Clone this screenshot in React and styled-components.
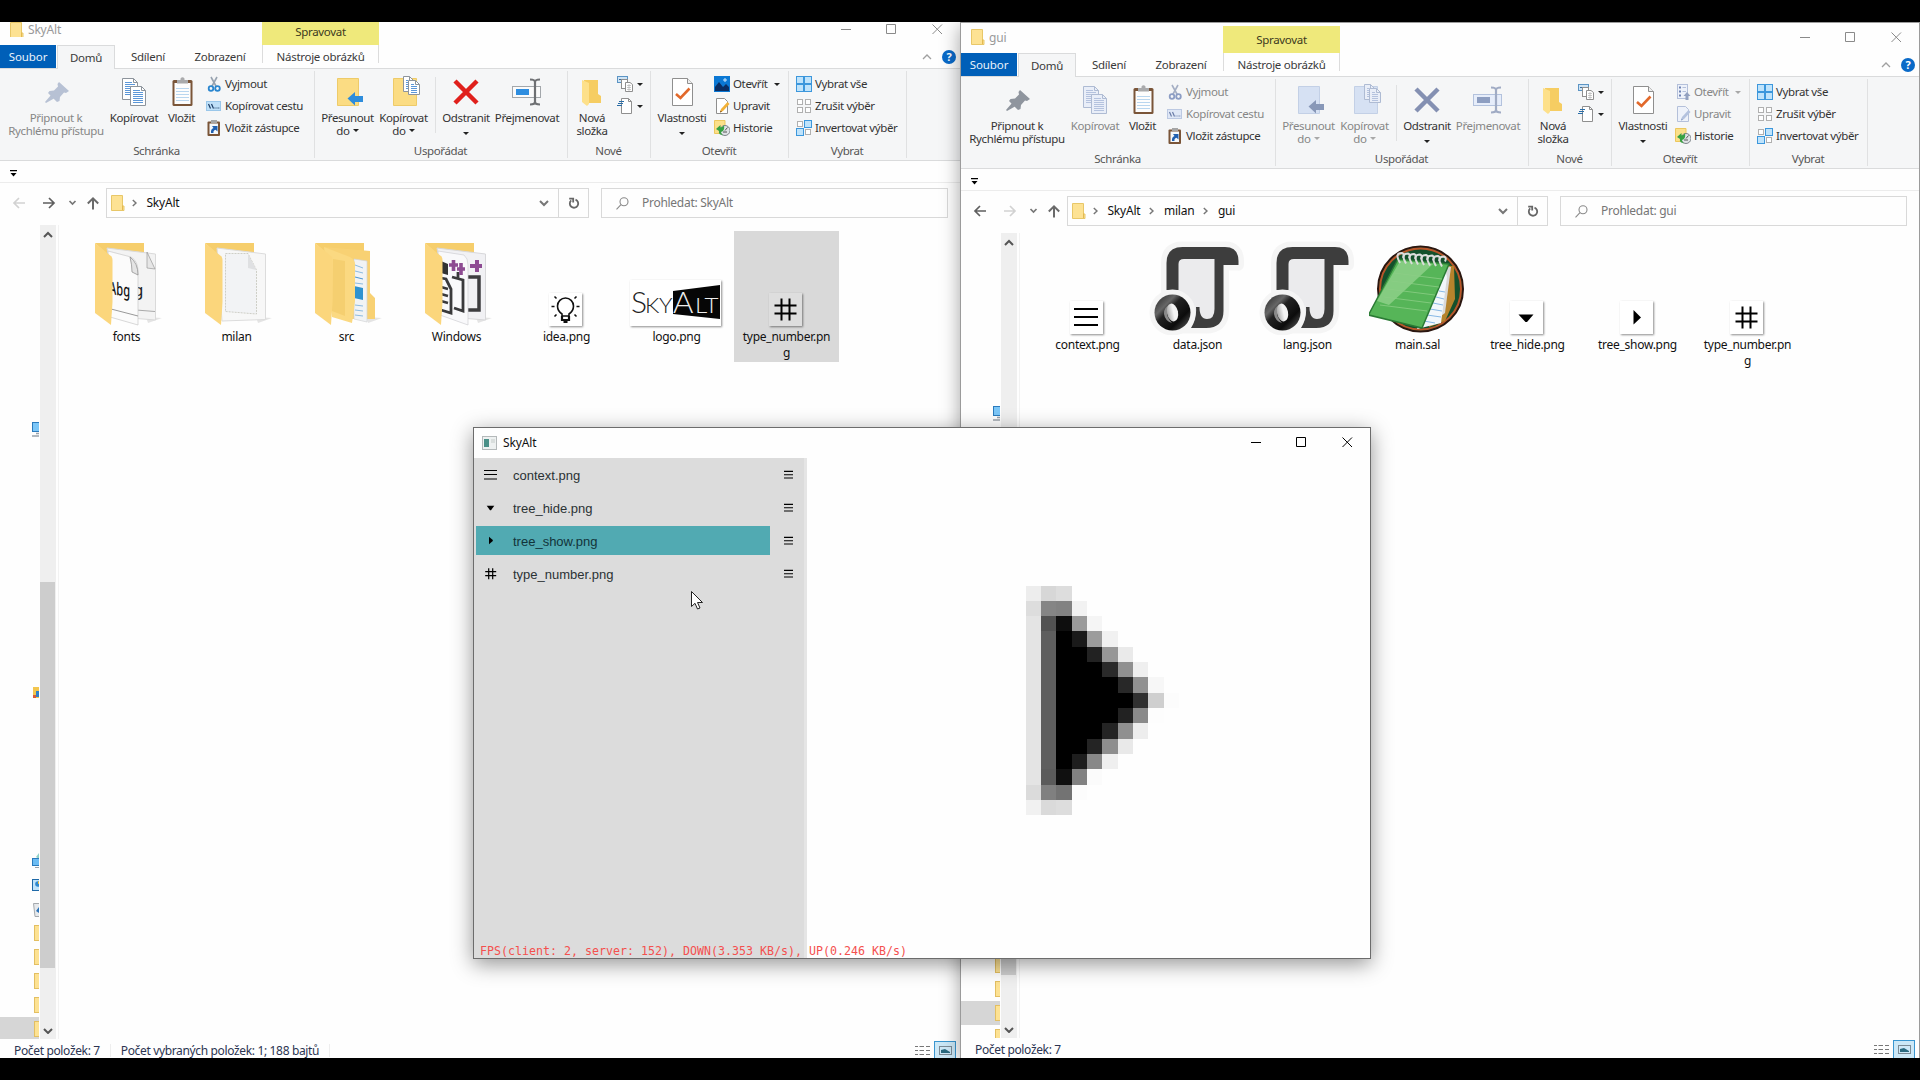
import React from "react";
import styled, { createGlobalStyle, css } from "styled-components";

const GlobalStyle = createGlobalStyle`
  html, body { margin: 0; padding: 0; background: #000; }
  *, *::before, *::after { box-sizing: border-box; }
  svg { display: block; flex: none; }
`;

const UI = `"Noto Sans", "Open Sans", sans-serif`;

/* ---------- desktop ---------- */

const Desktop = styled.div`
  position: relative;
  width: 1920px;
  height: 1080px;
  overflow: hidden;
  background: #000;
  font: 11.5px/13px ${UI};
  letter-spacing: -0.37px;
  color: #1e1e1e;
`;

const Screen = styled.div`
  position: absolute;
  inset: 22px 0;
  overflow: hidden;
  background: #fefefe;
`;

const Frame = styled.section`
  position: absolute;
  top: 0;
  left: ${(p) => p.$x}px;
  width: ${(p) => p.$w}px;
  height: 1036px;
  display: flex;
  flex-direction: column;
  background: #fefefe;
  ${(p) =>
    p.$framed &&
    css`
      border: 1px solid #9b9b9b;
      border-bottom: 0;
      box-shadow: 0 4px 18px rgba(0, 0, 0, 0.36);
    `}
`;

/* ---------- title bar and tabs ---------- */

const TitleBar = styled.header`
  display: flex;
  align-items: flex-end;
  height: ${(p) => p.$h}px;
  flex: none;
`;
const TitleName = styled.div`
  display: flex;
  align-items: flex-end;
  gap: 4px;
  width: 262px;
  height: 24px;
  padding: 0 0 8px 10px;
  color: #999;
  font-size: 12px;
  line-height: 15px;
  letter-spacing: -0.2px;
`;
const ContextTab = styled.div`
  width: 117px;
  height: 27px;
  max-height: 100%;
  padding-bottom: 7px;
  display: flex;
  align-items: flex-end;
  justify-content: center;
  background: #efe97b;
  color: #3c3a20;
  letter-spacing: -0.3px;
`;
const Caption = styled.div`
  display: flex;
  gap: 35px;
  margin-left: auto;
  padding: 0 17px 10px 0;
`;
const Tabs = styled.nav`
  display: flex;
  height: 24px;
  flex: none;
  border-bottom: 1px solid #dadbdc;
`;
const Tab = styled.div`
  width: ${(p) => p.$w}px;
  height: 23px;
  display: flex;
  align-items: center;
  justify-content: center;
  color: #3a3a3a;
  letter-spacing: -0.28px;
  ${(p) =>
    p.$file &&
    css`
      background: #005fb8;
      color: #e9f2fb;
      letter-spacing: -0.1px;
    `}
  ${(p) =>
    p.$active &&
    css`
      height: 24px;
      padding-bottom: 1px;
      background: #f5f6f7;
      border: 1px solid #dadbdc;
      border-bottom: 0;
      margin-left: 1px;
    `}
  ${(p) =>
    p.$ctx &&
    css`
      height: 18px;
      padding-top: 5px;
      border: 1px solid #dcdcdc;
      border-width: 0 1px;
      margin-left: auto;
    `}
`;
const TabGroup = styled.div`
  display: flex;
  width: 262px;
`;
const TabTools = styled.div`
  display: flex;
  align-items: center;
  gap: 10px;
  margin-left: auto;
  padding-right: 4px;
`;
const Help = styled.div`
  width: 14px;
  height: 14px;
  border-radius: 50%;
  background: #0a6ac8;
  color: #fff;
  font: 700 11px/14px ${UI};
  text-align: center;
`;

/* ---------- ribbon ---------- */

const Ribbon = styled.div`
  display: flex;
  height: 92px;
  flex: none;
  padding-top: 2px;
  background: #f5f6f7;
  border-bottom: 1px solid #dadbdc;
`;
const Group = styled.div`
  display: flex;
  flex-direction: column;
  justify-content: space-between;
  width: ${(p) => p.$w}px;
  height: 87px;
  padding-top: 5px;
  border-right: 1px solid #e0e1e2;
`;
const GroupName = styled.div`
  padding-bottom: 1px;
  padding-right: 1px;
  text-align: center;
  color: #555;
`;
const Tools = styled.div`
  display: flex;
  height: 62px;
`;
const Big = styled.div`
  display: flex;
  flex-direction: column;
  align-items: center;
  width: ${(p) => p.$w}px;
  margin-left: ${(p) => p.$ml || 0}px;
  color: ${(p) => (p.$off ? "#868686" : "#333")};
  text-align: center;
  white-space: nowrap;
`;
const BigText = styled.div`
  margin-top: 3px;
`;
const Inline = styled.span`
  display: inline-flex;
  align-items: center;
  gap: 3px;
  min-height: 13px;
`;
const Column = styled.div`
  display: flex;
  flex-direction: column;
  gap: 6px;
  margin-left: ${(p) => p.$ml}px;
`;
const Small = styled.div`
  display: flex;
  align-items: center;
  gap: 3px;
  height: 16px;
  color: ${(p) => (p.$off ? "#868686" : "#333")};
  white-space: nowrap;
`;
const SmallText = styled.span`
  padding-bottom: 2px;
`;
const Divider = styled.div`
  width: 1px;
  height: 56px;
  margin: 1px 2px 0 4px;
  background: #e0e1e2;
`;
const Down = styled.i`
  border: 3px solid transparent;
  border-top-color: ${(p) => (p.$off ? "#a8a8a8" : "#222")};
  border-bottom: 0;
  margin-left: ${(p) => p.$ml || 0}px;
`;

/* ---------- quick access and address ---------- */

const Quick = styled.div`
  display: flex;
  align-items: center;
  height: 22px;
  flex: none;
  padding: 3px 0 0 10px;
  border-bottom: 1px solid #ececec;
`;
const NavRow = styled.div`
  display: flex;
  height: 42px;
  flex: none;
  padding: 5px 12px 7px 0;
`;
const NavIcons = styled.div`
  width: 106px;
`;
const Address = styled.div`
  flex: 1;
  display: flex;
  align-items: center;
  padding-left: 4px;
  border: 1px solid #d9d9d9;
  font-size: 12px;
  line-height: 16px;
  letter-spacing: -0.22px;
  color: #111;
`;
const Crumb = styled.span`
  display: flex;
  align-items: center;
  gap: 9.5px;
  margin-left: ${(p) => p.$ml}px;
`;
const AddressEnd = styled.div`
  display: flex;
  align-items: center;
  justify-content: space-between;
  align-self: stretch;
  width: 49px;
  margin-left: auto;
`;
const Refresh = styled.div`
  display: flex;
  align-items: center;
  justify-content: center;
  width: 30px;
  height: 28px;
  border-left: 1px solid #d9d9d9;
`;
const Search = styled.div`
  display: flex;
  align-items: center;
  gap: 13px;
  width: 347px;
  margin-left: 12px;
  padding-left: 14px;
  border: 1px solid #d9d9d9;
  color: #767676;
  font-size: 12px;
  line-height: 16px;
  letter-spacing: -0.28px;
`;

/* ---------- body ---------- */

const Body = styled.div`
  display: flex;
  flex: 1;
  min-height: 0;
`;
const Tree = styled.ul`
  width: 39px;
  margin: 0 1px 0 0;
  padding: 0;
  overflow: hidden;
  list-style: none;
`;
const TreeRow = styled.li`
  display: flex;
  align-items: center;
  height: 24px;
  padding-left: 32px;
  background: ${(p) => (p.$sel ? "#d6d6d6" : "transparent")};
`;
const Scroll = styled.div`
  display: flex;
  flex-direction: column;
  justify-content: space-between;
  width: 16px;
  background: #efefef;
`;
const ScrollButton = styled.div`
  display: flex;
  align-items: center;
  justify-content: center;
  width: 15px;
  height: 18px;
`;
const Thumb = styled.div`
  width: 15px;
  height: 386px;
  margin-top: ${(p) => p.$top}px;
  margin-bottom: auto;
  background: #cdcdcd;
`;
const Files = styled.div`
  display: flex;
  flex: 1;
  align-items: flex-start;
  gap: 5px;
  margin-left: 2px;
  padding: 6px 0 0 15px;
  border-left: 1px solid #f2f2f2;
`;
const File = styled.figure`
  display: flex;
  flex-direction: column;
  align-items: center;
  width: 105px;
  height: 131px;
  margin: 0;
  background: ${(p) => (p.$sel ? "#d9d9d9" : "transparent")};
`;
const Thumbnail = styled.div`
  display: flex;
  align-items: flex-end;
  justify-content: center;
  width: 97px;
  height: 96px;
  padding-right: 1px;
`;
const Picture = styled.div`
  margin: 0 2px 1px 0;
  padding: 1px;
  background: ${(p) => (p.$sel ? "#dedede" : "#fff")};
  box-shadow: 0.5px 0.5px 2px rgba(0, 0, 0, 0.45);
`;
const Name = styled.figcaption`
  width: 92px;
  margin-top: 2px;
  color: #111;
  font-size: 12px;
  line-height: 16px;
  letter-spacing: -0.27px;
  text-align: center;
  word-break: break-all;
`;
const Status = styled.footer`
  display: flex;
  align-items: center;
  height: ${(p) => p.$h}px;
  flex: none;
  padding: ${(p) => p.$pad}px 4px 0 14px;
  color: #2c3552;
  font-size: 12px;
  letter-spacing: -0.35px;
`;
const StatusText = styled.span`
  padding-right: 10px;
  margin-right: 10px;
  border-right: 1px solid ${(p) => (p.$bar ? "#eee" : "transparent")};
`;
const Views = styled.div`
  display: flex;
  align-items: center;
  gap: 3px;
  margin-left: auto;
`;
const ViewOn = styled.div`
  display: flex;
  align-items: center;
  justify-content: center;
  width: 22px;
  height: 20px;
  border: 1px solid #3a96d0;
  background: #cce8f7;
`;

/* ---------- application window ---------- */

const AppWindow = styled.section`
  position: absolute;
  left: 473px;
  top: 405px;
  width: 898px;
  height: 532px;
  display: flex;
  flex-direction: column;
  border: 1px solid #6c6c6c;
  background: #fefefe;
  box-shadow: 0 5px 20px rgba(0, 0, 0, 0.42);
`;
const AppTitle = styled.header`
  display: flex;
  align-items: center;
  gap: 6px;
  height: 30px;
  padding: 0 17px 1px 8px;
  color: #111;
  font-size: 12px;
  letter-spacing: -0.15px;
`;
const AppCaption = styled.div`
  display: flex;
  gap: 35px;
  margin-left: auto;
`;
const AppBody = styled.div`
  display: flex;
  flex: 1;
`;
const Side = styled.div`
  display: flex;
  flex-direction: column;
  gap: 4px;
  width: 333px;
  padding: 2px;
  background: #dcdcdc;
  border-right: 3px solid #e5e5e5;
`;
const SideRow = styled.div`
  display: flex;
  align-items: center;
  gap: 14px;
  height: 29px;
`;
const SideItem = styled.div`
  display: flex;
  align-items: center;
  gap: 13px;
  width: 294px;
  height: 29px;
  padding-left: 4px;
  background: ${(p) => (p.$on ? "#51aab2" : "transparent")};
  color: ${(p) => (p.$on ? "#12343a" : "#2b3234")};
  font: 13px/19px "Liberation Sans", Arial, sans-serif;
  letter-spacing: 0;
`;
const SideName = styled.span`
  padding-top: 2px;
`;
const Canvas = styled.div`
  flex: 1;
  padding: 128px 0 0 219px;
`;
const Fps = styled.div`
  position: absolute;
  left: 6px;
  bottom: 0;
  color: #f4504e;
  font: 11.63px/14px "DejaVu Sans Mono", monospace;
  letter-spacing: 0;
  white-space: pre;
`;
const Cursor = styled.svg`
  position: absolute;
  left: 690px;
  top: 568px;
`;

/* ---------- glyphs ---------- */

const CaptionGlyphs = ({ color }) => (
  <>
    {["M1 5.5H11", "M.5 .5H9.5V9.5H.5Z", "M.5 .5L10 10M10 .5L.5 10"].map((d) => (
      <svg key={d} width="11" height="11" viewBox="0 0 11 11" fill="none" stroke={color}>
        <path d={d} />
      </svg>
    ))}
  </>
);

const MiniFolder = ({ h = 16 }) => (
  <svg width="14" height={h} viewBox="0 0 14 16" preserveAspectRatio="xMinYMin slice">
    <path d="M.5 .5H11.5V11H13V15.5H.5Z" fill="#fde293" stroke="#e8c768" />
    <path d="M11.5 10.5V15" stroke="#e3b951" />
  </svg>
);

const Sheet = ({ x, y, w = 15, h = 20, off }) => (
  <g transform={`translate(${x} ${y})`}>
    <path
      d={`M.5 .5H${w - 4.5}L${w - 0.5} 4.5V${h - 0.5}H.5Z`}
      fill={off ? "#e9eef8" : "#fff"}
      stroke={off ? "#aebbd3" : "#8d949c"}
    />
    <path d={`M${w - 4.5} .5V4.5H${w - 0.5}`} fill="none" stroke={off ? "#aebbd3" : "#8d949c"} />
    {[4, 6, 8, 10, 12, 14, 16].filter((v) => v < h - 2).map((v) => (
      <path key={v} d={`M3 ${v + 0.5}H${v < 6 ? w - 6 : w - 3}`} stroke={off ? "#b4c2de" : "#5c97d8"} />
    ))}
  </g>
);

const bigIcons = {
  pin: (o) => (
    <g fill={o ? "#b7c1d4" : "#8f959e"}>
      <path d="M19 6L29 15L26 17L24 16.5L20 21L19.500 25L17 26L8 17L9.500 15L14 14.500L18 10.500L17.500 8Z" />
      <path d="M11 19L14 22.500L6 27L5 26Z" />
    </g>
  ),
  copy: (o) => (
    <>
      <Sheet x={4} y={2} w={16} h={22} off={o} />
      <Sheet x={12} y={10} w={16} h={20} off={o} />
    </>
  ),
  paste: () => (
    <>
      <rect x="6.500" y="4" width="20" height="26" rx="1.500" fill="#7a5538" />
      <rect x="8.500" y="7" width="16" height="21" fill="#fdfdfd" />
      <path d="M10 12.500H23M10 15.500H23M10 18.500H23M10 21.500H23M10 24.500H23" stroke="#b9d6ef" />
      <path d="M11 4H14.500V2.500Q16.500 0 18.500 2.500V4H22V7.500H11Z" fill="#a9aaac" />
    </>
  ),
  move: (o) => (
    <>
      <path d="M5.500 2.500H26.500V29.500H5.500Z" fill={o ? "#d6e1f3" : "#fbdc83"} stroke={o ? "#c3d0e6" : "#eecb69"} />
      <path d="M15.500 22.500L23 16V20H31V26H23V29.500Z" fill={o ? "#8898b8" : "#2e8ddc"} />
    </>
  ),
  copyTo: (o) => (
    <>
      <path d="M5.500 2.500H28.500V29.500H5.500Z" fill={o ? "#d6e1f3" : "#fbdc83"} stroke={o ? "#c3d0e6" : "#eecb69"} />
      <Sheet x={15} y={0} w={11} h={16} off={o} />
      <Sheet x={20} y={4} w={12} h={15} off={o} />
    </>
  ),
  remove: (o) => <path d="M5 5L27 27M27 5L5 27" stroke={o ? "#8490b2" : "#e0201c"} strokeWidth="4.500" />,
  rename: (o) => (
    <>
      <rect x="1.500" y="10.500" width="28" height="11" fill={o ? "#e6edfa" : "#fbfbfb"} stroke={o ? "#b3c2dd" : "#a3a7ab"} />
      <rect x="5" y="13" width="13" height="6" fill={o ? "#8d9ec1" : "#2f8ee0"} />
      <path d="M19 3.500Q24 3.500 24 6V26Q24 28.500 19 28.500M29 3.500Q24 3.500 24 6M24 26Q24 28.500 29 28.500" fill="none" stroke={o ? "#a0abc4" : "#6e7073"} strokeWidth="2.200" />
    </>
  ),
  newFolder: () => (
    <>
      <path d="M8 4H22V18L25 20V27H8Z" fill="#f6cd62" />
      <path d="M6 4L13 7V28L11 30L6 26Z" fill="#fde08a" />
    </>
  ),
  props: () => (
    <>
      <path d="M6.500 2.500H21.500L26.500 7.500V29.500H6.500Z" fill="#fff" stroke="#8f8f8f" />
      <path d="M21.500 2.500V7.500H26.500" fill="#eee" stroke="#8f8f8f" />
      <path d="M10 18L14.500 22L23.500 12.500" fill="none" stroke="#e2692b" strokeWidth="2.600" />
    </>
  ),
};

const grid = (cells) => (
  <>
    {[[0.5, 0.5], [8.5, 0.5], [0.5, 8.5], [8.5, 8.5]].map(([x, y], i) =>
      cells[i] ? (
        <rect key={i} x={x} y={y} width="7" height="7" fill="#bfe3fb" stroke="#3c97dc" />
      ) : (
        <rect key={i} x={x + 1} y={y + 1} width="5" height="5" fill="#fff" stroke="#b0b0b0" />
      )
    )}
  </>
);

const smallIcons = {
  cut: (o) => (
    <>
      <path d="M5 1L10.500 11M11 1L5.500 11" stroke={o ? "#a5afc4" : "#98a3b0"} strokeWidth="1.600" />
      <g fill="none" stroke={o ? "#8c9dc4" : "#2a86cf"} strokeWidth="1.800">
        <circle cx="5" cy="12.500" r="2.300" />
        <circle cx="11.500" cy="12.500" r="2.300" />
      </g>
    </>
  ),
  path: (o) => (
    <>
      <rect x=".5" y="3.500" width="14" height="9" fill={o ? "#dfe7f6" : "#bfe0f8"} stroke={o ? "#bcc9e2" : "#9ac7ea"} />
      <path d="M2.500 6L4.500 10.500M5.500 6L7.500 10.500M8.500 10H9.500M10.500 10H11.500M12.300 10H13.300" stroke={o ? "#6a7ca8" : "#1c3d66"} strokeWidth="1.200" />
    </>
  ),
  shortcut: () => (
    <>
      <rect x="1.500" y="1.500" width="12.500" height="14.500" rx="1" fill="#7a5538" />
      <rect x="3.500" y="3.500" width="8.500" height="10.500" fill="#f4f8fc" />
      <rect x="5" y="0" width="6" height="3" fill="#a5a5a5" />
      <path d="M5 13Q4.500 9 7.500 8L6 6H11.500V11.500L9.500 9.800Q7 10.500 7.500 13Z" fill="#1f5fb0" />
    </>
  ),
  image: () => (
    <>
      <rect width="16" height="16" fill="#0b78d4" />
      <path d="M1 11L5 6L9 11L12 8L15 11V15H1Z" fill="#0b2e63" />
      <path d="M11 2V6M9 4H13" stroke="#cfe9ff" />
    </>
  ),
  list: () => (
    <>
      <rect x="2.500" y=".5" width="10" height="14" fill="#eef2fa" stroke="#b4c0da" />
      <path d="M4 3.500H6M4 7.500H6M4 11.500H6" stroke="#6f83b3" strokeWidth="2" />
      <path d="M7.500 3.500H11M7.500 7.500H11" stroke="#b4c0da" />
      <path d="M12 8L15.500 12H13.500V16H10.500V12H8.500Z" fill="#93a1c0" />
    </>
  ),
  edit: (o) => (
    <>
      <path d="M2.500 .5H10.500L13.500 3.500V15.500H2.500Z" fill={o ? "#eef2fa" : "#fff"} stroke={o ? "#b4c0da" : "#8f8f8f"} />
      <path d="M6 14.500L7 11L13.500 4L15.500 6L9 13Z" fill={o ? "#b4c2de" : "#f2b138"} />
      <path d="M6 14.500L6.600 12.500L8 13.800Z" fill={o ? "#8c9dc4" : "#7a4b18"} />
    </>
  ),
  history: () => (
    <>
      <path d="M.5 .5H11V13.500H.5Z" fill="#fbe08a" stroke="#ecc75d" />
      <circle cx="11" cy="10.500" r="5" fill="#dfe3e6" stroke="#7c8388" />
      <path d="M11 10.500L13.500 7.500M9 12H13" stroke="#555" />
      <path d="M2 9L6.500 5V7.500Q9.500 7 10 5Q11 11 7 12Q7 14 9 15.500Q4 14.500 5 11Z" fill="#37a243" />
    </>
  ),
  all: () => grid([1, 1, 1, 1]),
  none: () => grid([0, 0, 0, 0]),
  invert: () => grid([0, 1, 1, 0]),
  newItem: () => (
    <>
      <rect x=".5" y=".5" width="10" height="6" fill="#cfe4f5" stroke="#5b94c4" />
      <path d="M2 3.500H9" stroke="#3a6d9c" strokeDasharray="2 1" />
      <rect x="4.500" y="3.500" width="6" height="9" fill="#fff" stroke="#8f8f8f" />
      <path d="M8.500 6.500H13L15.500 8.500V15.500H8.500Z" fill="#fff" stroke="#8f8f8f" />
      <path d="M10 9.500H14M10 11.500H14M10 13.500H14M12 8V15" stroke="#b5b5b5" strokeWidth=".7" />
    </>
  ),
  easy: () => (
    <>
      <path d="M4.500 .5H11.500L14.500 3.500V15.500H4.500Z" fill="#fff" stroke="#8f8f8f" />
      <path d="M11.500 .5V3.500H14.500" fill="none" stroke="#8f8f8f" />
      <path d="M2 3.500H7M1 5.500H6M0 7.500H5" stroke="#2b6ea8" />
    </>
  ),
};

const BigIcon = ({ name, off }) => (
  <svg width="32" height="32" viewBox="0 0 32 32">{bigIcons[name](off)}</svg>
);
const SmallIcon = ({ name, off }) => (
  <svg width="16" height="16" viewBox="0 0 16 16">{smallIcons[name](off)}</svg>
);

const NavArrows = ({ forward }) => {
  const [b, f] = forward ? ["#d2d2d2", "#5f5f5f"] : ["#5f5f5f", "#d2d2d2"];
  return (
    <svg width="106" height="30" viewBox="0 0 106 30" fill="none" strokeWidth="1.700">
      <path d="M25 15H14M19 10L14 15L19 20" stroke={b} />
      <path d="M43 15H54M49 10L54 15L49 20" stroke={f} />
      <path d="M69.500 13L72.500 16L75.500 13" stroke="#777" />
      <path d="M93 21.500V10.500M87.800 15.500L93 10.300L98.200 15.500" stroke="#6a6a6a" strokeWidth="2" />
    </svg>
  );
};

const Chevron = ({ d, w = 9, h = 9, color = "#555", sw = 2 }) => (
  <svg width={w} height={h} viewBox={`0 0 ${w} ${h}`} fill="none" stroke={color} strokeWidth={sw}>
    <path d={d} />
  </svg>
);

const hashPath = "M0 7H22M0 15H22M7 0V22M15 0V22";

/* ---------- file thumbnails ---------- */

const FolderBack = () => (
  <>
    <path d="M17 12H66V30L30 24Z" fill="#f6ce6c" />
    <path d="M70 92L84 87L68 86Z" fill="#e4e4e4" />
  </>
);
const FolderFront = () => (
  <path d="M17 12L33.500 25.500Q34.500 27 34.500 29V71L33 94L17 82Z" fill="#fbd67c" />
);

const thumbs = {
  fonts: () => (
    <svg width="96" height="96" viewBox="0 0 96 96">
      <FolderBack />
      <path d="M29 17L77.500 23V89L40 86Z" fill="#f3f3f3" stroke="#dadada" />
      <path d="M69 21L77 38L69 37Z" fill="#e6e6e6" stroke="#999" strokeWidth=".7" />
      <path d="M58 79L77 80.500" stroke="#aaa" />
      <text x="55" y="65" fontSize="17" fontFamily="Noto Sans" fill="#222">g</text>
      <path d="M30 20L53 26Q60 30 60 40V94L32 86Z" fill="#fbfbfb" stroke="#c9c9c9" strokeWidth=".7" />
      <path d="M52 26Q54 34 54 41L60 44Q60 32 52 26Z" fill="#e4e4e4" stroke="#888" strokeWidth=".7" />
      <path d="M33 78L60 85" stroke="#999" />
      <text transform="translate(31 63) skewY(8)" fontSize="17.500" letterSpacing="0" textLength="21" lengthAdjust="spacingAndGlyphs" fontFamily="Noto Sans" fontWeight="500" fill="#111">Abg</text>
      <FolderFront />
    </svg>
  ),
  milan: () => (
    <svg width="96" height="96" viewBox="0 0 96 96">
      <FolderBack />
      <path d="M29 17L77.500 23V88.500L34 90Z" fill="#f7f7f7" stroke="#dcdcdc" />
      <path d="M37.500 22.500H60L68.500 39V83L37.500 80.500Z" fill="#f2f3f5" stroke="#c4c4ba" strokeDasharray="2 1" strokeWidth=".8" />
      <path d="M60 23L68.500 39L60 37Z" fill="#dfe0e2" />
      <FolderFront />
    </svg>
  ),
  src: () => (
    <svg width="96" height="96" viewBox="0 0 96 96">
      <FolderBack />
      <path d="M26 16L72 20V62L77 67V88H50Z" fill="#f8d173" />
      <path d="M56 28L69 30V91L56 88Z" fill="#f1f3f5" stroke="#d2d4d6" strokeWidth=".7" />
      <path d="M57 34L65 37M57 40L65 42M57 52L65 53M57 74L65 75M57 79L65 80M57 84L65 85" stroke="#8dbbe0" />
      <path d="M57 46L65 48" stroke="#4d97d0" />
      <path d="M56 55L65 57V69L56 67Z" fill="#2f92cf" />
      <path d="M26 16L52 26Q57 29 57 33V70L54 92L34 86Z" fill="#fbd981" />
      <path d="M35 28L47 30V85L34 80Z" fill="#f5cf70" />
      <FolderFront />
    </svg>
  ),
  windows: () => (
    <svg width="96" height="96" viewBox="0 0 96 96">
      <FolderBack />
      <path d="M29 17L77.500 23V89L40 86Z" fill="#f1f1f4" stroke="#d8d8da" />
      <path d="M60 46H71V79H60" fill="none" stroke="#3d3d3f" strokeWidth="3.500" />
      <path d="M62 35H74M69 29V41" stroke="#8d4b92" strokeWidth="4" />
      <path d="M30 20L56 24Q60 27 60 34V94L32 84Z" fill="#f9f9fb" stroke="#cfcfd2" strokeWidth=".7" />
      <path d="M33 30L40 33V44L33 42Z" fill="#333" />
      <path d="M33 47L38 48L43 58V82L33 79M44 46L55 49V80L46 77M50 41V47" fill="none" stroke="#3a3a3c" strokeWidth="2.800" />
      <path d="M33 56L40 58M33 63L40 65M33 70L40 72" stroke="#3a3a3c" strokeWidth="2.500" />
      <path d="M41 34H50M45.500 29V40M49 38H57M53 32V44" stroke="#8d4b92" strokeWidth="3.600" />
      <FolderFront />
    </svg>
  ),
  idea: () => (
    <Picture>
      <svg width="31" height="31" viewBox="0 0 31 31" fill="none" stroke="#111" strokeWidth="1.600">
        <path d="M12 22V20Q7.500 17 7.500 12A8 8 0 0 1 23.500 12Q23.500 17 19 20V22Z" />
        <path d="M12 22V26H19V22M13.500 28H17.500" strokeWidth="2.200" />
        <path d="M1.500 12.500H4.500M26.500 12.500H29.500M4.500 2.500L6.500 4.500M26.500 2.500L24.500 4.500M4.500 22.500L6.500 20.500M26.500 22.500L24.500 20.500" />
      </svg>
    </Picture>
  ),
  logo: () => (
    <Picture>
      <svg width="89" height="44" viewBox="0 0 89 44">
        <path d="M42 10L89 4V38L42 33Z" fill="#060606" />
        <g fontFamily="Lato" fontWeight="300" fill="#222">
          <text x="0" y="32" fontSize="30" letterSpacing="0">S</text>
          <text x="14" y="32" fontSize="22" textLength="27" lengthAdjust="spacingAndGlyphs">KY</text>
          <text x="42" y="32" fontSize="30" textLength="20" lengthAdjust="spacingAndGlyphs" fill="#eee">A</text>
          <text x="64" y="32" fontSize="22" textLength="23" lengthAdjust="spacingAndGlyphs" fill="#eee">LT</text>
        </g>
      </svg>
    </Picture>
  ),
  hash: (sel) => (
    <Picture $sel={sel}>
      <svg width="31" height="31" viewBox="-4 -4 31 31" fill="none" stroke="#000" strokeWidth="2">
        <path d={hashPath} transform="translate(.5 .5)" />
      </svg>
    </Picture>
  ),
  menu: () => (
    <Picture>
      <svg width="31" height="31" viewBox="0 0 31 31" stroke="#000" strokeWidth="2">
        <path d="M3 7H27M3 15H27M3 23H27" />
      </svg>
    </Picture>
  ),
  hide: () => (
    <Picture>
      <svg width="31" height="31" viewBox="0 0 31 31">
        <path d="M7.500 12.500H22.500L16 20H14.500Z" />
      </svg>
    </Picture>
  ),
  show: () => (
    <Picture>
      <svg width="31" height="31" viewBox="0 0 31 31">
        <path d="M12.500 8L20 15.500L12.500 22.500Z" />
      </svg>
    </Picture>
  ),
  json: () => (
    <svg width="96" height="96" viewBox="0 0 96 96">
      <defs>
        <linearGradient id="ball" x1="0" y1="0" x2="1" y2="1">
          <stop offset="0" stopColor="#222" />
          <stop offset=".3" stopColor="#666" />
          <stop offset=".42" stopColor="#222" />
          <stop offset=".7" stopColor="#0c0c0c" />
          <stop offset="1" stopColor="#666" />
        </linearGradient>
        <linearGradient id="hole" x1="0" y1="0" x2="1" y2="0">
          <stop offset="0" stopColor="#a8a8a8" />
          <stop offset=".6" stopColor="#f4f4f4" />
        </linearGradient>
      </defs>
      <path d="M17.500 51V24Q17.500 8 33.500 8H76Q89.500 8 89.500 22V26H74.500V72Q74.500 89 57 89H24Z" fill="#f5f5f5" stroke="#f5f5f5" strokeWidth="11" strokeLinejoin="round" />
      <path d="M29 20H66V80H40L29 60Z" fill="#ebebed" />
      <path d="M17.500 51V24Q17.500 8 33.500 8H76Q89.500 8 89.500 22V26H74.500V72Q74.500 89 57 89H42Q48 80 47 68H50.500Q50.500 80 58 80Q65.500 80 65.500 70V20H35Q29.500 20 29.500 25V51Z" fill="#3d3d3d" />
      <circle cx="23.500" cy="73.500" r="23" fill="#f5f5f5" />
      <circle cx="23.500" cy="73.500" r="18" fill="url(#ball)" />
      <path d="M22 65Q14.500 68 15 75Q16 82 23 84Q17.500 78 18 73Q19 67 22 65Z" fill="#8a8a8a" />
      <ellipse cx="23.500" cy="73.500" rx="5.500" ry="9" transform="rotate(-12 23.500 73.500)" fill="url(#hole)" />
    </svg>
  ),
  sal: () => (
    <svg width="96" height="96" viewBox="0 0 96 96">
      <circle cx="51.500" cy="50" r="42.500" fill="#14502c" stroke="#2a1610" strokeWidth="2" />
      <circle cx="51.500" cy="50" r="40.500" fill="none" stroke="#b9552a" strokeWidth="2" />
      <path d="M68 26L85 27L86 60L76 82L60 88Z" fill="#b5832c" />
      <path d="M72 26L82 28L76 74L60 86Z" fill="#d8d8d8" />
      <path d="M76 30L78 38L72 84L48 90Z" fill="#f2f7fb" />
      <path d="M70 52L76 53M67 58L75 60M64 64L74 66M61 70L73 72M58 76L72 78M55 82L66 84" stroke="#86b8e6" />
      <path d="M29 20L80 25L53 89L-.500 76Z" fill="#56b558" stroke="#2a7a34" strokeWidth="1.500" strokeLinejoin="round" />
      <path d="M31 22L64 25L20 66L8 62Z" fill="#a5dc9c" opacity=".6" />
      <path d="M25 34L73 40M22 42L70 48M18 50L66 56M15 58L62 64M11 66L58 72" stroke="#8ccf86" opacity=".8" />
      <g fill="none" stroke="#dcdcdc" strokeWidth="2">
        {[31, 37, 43, 49, 55, 61, 67, 73].map((x, i) => (
          <path key={x} d={`M${x} ${24 + i * 0.5}Q${x - 6} ${14 + i * 0.5} ${x + 2} ${14 + i * 0.5}Q${x + 5} ${15 + i * 0.5} ${x + 3} ${19 + i * 0.5}`} />
        ))}
      </g>
    </svg>
  ),
};

/* ---------- tree icons ---------- */

const treeIcons = {
  pc: (
    <>
      <rect x=".5" y="1.500" width="14" height="9" fill="#7cc7f8" stroke="#2b7bbd" />
      <path d="M4 12.500H12M0 15H16" stroke="#9aa2ab" strokeWidth="1.500" />
    </>
  ),
  app: (
    <>
      <path d="M1 2H10V13H1Z" fill="#f3c64e" />
      <path d="M4 6H10V12H4Z" fill="#2f80c8" />
      <path d="M1 10H4V13H1Z" fill="#d85a3a" />
    </>
  ),
  net: (
    <>
      <path d="M4 4L7 0V6Z" fill="#8fd2c9" />
      <rect x=".5" y="5.500" width="14" height="7" fill="#6cbcf3" stroke="#2b7bbd" />
      <path d="M3 14.500H10" stroke="#9aa2ab" />
    </>
  ),
  panel: (
    <>
      <rect x=".5" y="2.500" width="14" height="11" fill="#bfe3fa" stroke="#1f6aa8" />
      <circle cx="6" cy="7" r="2.800" fill="#2f88cf" />
      <path d="M6 7V4L9 6Z" fill="#f2c23c" />
    </>
  ),
  bin: (
    <>
      <path d="M1.500 2.500H13L11.500 15.500H3Z" fill="#e6e9ec" stroke="#a5a9ad" />
      <path d="M4 10L7 6V12Z" fill="#2c73b8" />
    </>
  ),
};

const TreeIcon = ({ name }) =>
  name === "folder" ? (
    <svg width="16" height="16" viewBox="0 0 16 16">
      <rect x="2.500" y=".5" width="12" height="15" fill="#fde293" stroke="#e3bf62" />
    </svg>
  ) : (
    <svg width="16" height="16" viewBox="0 0 16 16">{treeIcons[name]}</svg>
  );

/* ---------- explorer ---------- */

const BigTool = ({ icon, w, ml, off, iconOff = off, lines, menu }) => (
  <Big $w={w} $ml={ml} $off={off}>
    <BigIcon name={icon} off={iconOff} />
    <BigText>
      {lines.map((line, i) => (
        <div key={line}>
          <Inline>
            {line}
            {menu && i === 1 && <Down $off={off} />}
          </Inline>
        </div>
      ))}
      {menu && lines.length === 1 && (
        <Inline>
          <Down $off={off} />
        </Inline>
      )}
    </BigText>
  </Big>
);

const SmallTool = ({ icon, off, children, menu }) => (
  <Small $off={off}>
    <SmallIcon name={icon} off={off} />
    {children && <SmallText>{children}</SmallText>}
    {menu && <Down $off={off} $ml={children ? 3 : 1} />}
  </Small>
);

function Explorer({ win }) {
  const { off } = win;
  return (
    <Frame $x={win.x} $w={win.w} $framed={win.framed}>
      <TitleBar $h={win.titleH}>
        <TitleName>
          <MiniFolder h={win.framed ? 16 : 15} />
          {win.title}
        </TitleName>
        <ContextTab>Spravovat</ContextTab>
        <Caption>
          <CaptionGlyphs color="#8a8a8a" />
        </Caption>
      </TitleBar>
      <Tabs>
        <TabGroup>
          <Tab $w={56} $file>Soubor</Tab>
          <Tab $w={58} $active>Domů</Tab>
          <Tab $w={66}>Sdílení</Tab>
          <Tab $w={78}>Zobrazení</Tab>
        </TabGroup>
        <div>
          <Tab $w={117} $ctx>Nástroje obrázků</Tab>
        </div>
        <TabTools>
          <Chevron w={10} h={6} d="M1 5L5 1L9 5" color="#a0a0a0" sw={1.3} />
          <Help>?</Help>
        </TabTools>
      </Tabs>
      <Ribbon>
        <Group $w={315}>
          <Tools>
            <BigTool icon="pin" w={104} ml={4} off={off.pin} lines={["Připnout k", "Rychlému přístupu"]} />
            <BigTool icon="copy" w={52} off={off.edit} lines={["Kopírovat"]} />
            <BigTool icon="paste" w={43} lines={["Vložit"]} />
            <Column $ml={3}>
              <SmallTool icon="cut" off={off.edit}>Vyjmout</SmallTool>
              <SmallTool icon="path" off={off.edit}>Kopírovat cestu</SmallTool>
              <SmallTool icon="shortcut">Vložit zástupce</SmallTool>
            </Column>
          </Tools>
          <GroupName>Schránka</GroupName>
        </Group>
        <Group $w={253}>
          <Tools>
            <BigTool icon="move" w={57} ml={4} off={off.edit} lines={["Přesunout", "do"]} menu />
            <BigTool icon="copyTo" w={55} off={off.edit} lines={["Kopírovat", "do"]} menu />
            <Divider />
            <BigTool icon="remove" w={56} iconOff={off.edit} lines={["Odstranit"]} menu />
            <BigTool icon="rename" w={66} off={off.edit} lines={["Přejmenovat"]} />
          </Tools>
          <GroupName>Uspořádat</GroupName>
        </Group>
        <Group $w={83}>
          <Tools>
            <BigTool icon="newFolder" w={40} ml={4} lines={["Nová", "složka"]} />
            <Column $ml={5}>
              <SmallTool icon="newItem" menu />
              <SmallTool icon="easy" menu />
            </Column>
          </Tools>
          <GroupName>Nové</GroupName>
        </Group>
        <Group $w={138}>
          <Tools>
            <BigTool icon="props" w={54} ml={4} lines={["Vlastnosti"]} menu />
            <Column $ml={5}>
              <SmallTool icon={off.edit ? "list" : "image"} off={off.edit} menu>Otevřít</SmallTool>
              <SmallTool icon="edit" off={off.edit}>Upravit</SmallTool>
              <SmallTool icon="history">Historie</SmallTool>
            </Column>
          </Tools>
          <GroupName>Otevřít</GroupName>
        </Group>
        <Group $w={118}>
          <Tools>
            <Column $ml={7}>
              <SmallTool icon="all">Vybrat vše</SmallTool>
              <SmallTool icon="none">Zrušit výběr</SmallTool>
              <SmallTool icon="invert">Invertovat výběr</SmallTool>
            </Column>
          </Tools>
          <GroupName>Vybrat</GroupName>
        </Group>
      </Ribbon>
      <Quick>
        <svg width="7" height="7" viewBox="0 0 7 7">
          <path d="M0 0H7V1.200H0ZM.5 3H6.500L3.500 6.500Z" />
        </svg>
      </Quick>
      <NavRow>
        <NavIcons>
          <NavArrows forward={win.forward} />
        </NavIcons>
        <Address>
          <MiniFolder />
          {win.path.map((p, i) => (
            <Crumb key={p} $ml={i ? 9 : 7}>
              <Chevron w={5} h={8} d="M.8 1L4 4L.8 7" color="#777" sw={1.500} />
              {p}
            </Crumb>
          ))}
          <AddressEnd>
            <Chevron w={10} h={7} d="M1 1L5 5L9 1" color="#777" />
            <Refresh>
              <svg width="12" height="12" viewBox="0 0 12 12" fill="none" stroke="#666" strokeWidth="1.800">
                <path d="M7.500 2.600A4.200 4.200 0 1 1 3.200 3.400" />
                <path d="M1.200 1.600H5.200V5.400" />
              </svg>
            </Refresh>
          </AddressEnd>
        </Address>
        <Search>
          <svg width="13" height="13" viewBox="0 0 13 13" fill="none" stroke="#8a8a8a" strokeWidth="1.100">
            <circle cx="8" cy="4.800" r="4" />
            <path d="M5 7.700L.5 12.300" />
          </svg>
          Prohledat: {win.title}
        </Search>
      </NavRow>
      <Body>
        <Tree>
          {win.tree.map((name, i) => (
            <TreeRow key={i} $sel={i === win.treeSel}>{name && <TreeIcon name={name} />}</TreeRow>
          ))}
        </Tree>
        <Scroll>
          <ScrollButton>
            <Chevron w={10} h={7} d="M1 6L5 2L9 6" />
          </ScrollButton>
          <Thumb $top={win.thumbTop} />
          <ScrollButton>
            <Chevron w={10} h={7} d="M1 2L5 6L9 2" />
          </ScrollButton>
        </Scroll>
        <Files>
          {win.files.map(([name, kind, sel]) => (
            <File key={name} $sel={sel}>
              <Thumbnail>{thumbs[kind](sel)}</Thumbnail>
              <Name>{name}</Name>
            </File>
          ))}
        </Files>
      </Body>
      <Status $h={win.statusH} $pad={win.statusPad}>
        {win.status.map((s) => (
          <StatusText key={s} $bar={!win.framed}>{s}</StatusText>
        ))}
        <Views>
          <svg width="16" height="11" viewBox="0 0 16 11" stroke="#777">
            <path d="M0 1.500H3M0 5.500H3M0 9.500H3M4.500 1.500H9M4.500 5.500H9M4.500 9.500H9M11 1.500H15M11 5.500H15M11 9.500H15" />
          </svg>
          <ViewOn>
            <svg width="13" height="9" viewBox="0 0 13 9">
              <rect x=".5" y=".5" width="12" height="8" fill="#cfe9f8" stroke="#7b8b96" />
              <path d="M2 4L6 3L11 6V7H2Z" fill="#2b6a80" />
            </svg>
          </ViewOn>
        </Views>
      </Status>
    </Frame>
  );
}

const gap = (n) => Array(n).fill(null);
const folders = (n) => Array(n).fill("folder");

const leftWindow = {
  x: 0, w: 960, titleH: 23, title: "SkyAlt", path: ["SkyAlt"], forward: true,
  off: { pin: true, edit: false },
  tree: [...gap(8), "pc", ...gap(10), "app", ...gap(6), "net", "panel", "bin", ...folders(5)],
  treeSel: 33, thumbTop: 339, statusH: 19, statusPad: 4,
  status: ["Počet položek: 7", "Počet vybraných položek: 1; 188 bajtů"],
  files: [
    ["fonts", "fonts"], ["milan", "milan"], ["src", "src"], ["Windows", "windows"],
    ["idea.png", "idea"], ["logo.png", "logo"], ["type_number.png", "hash", true],
  ],
};

const rightWindow = {
  x: 960, w: 960, titleH: 30, title: "gui", path: ["SkyAlt", "milan", "gui"], framed: true,
  off: { pin: false, edit: true },
  tree: [...gap(7), "pc", ...gap(10), "app", ...gap(8), ...folders(7)],
  treeSel: 32, thumbTop: 338, statusH: 20, statusPad: 3,
  status: ["Počet položek: 7"],
  files: [
    ["context.png", "menu"], ["data.json", "json"], ["lang.json", "json"], ["main.sal", "sal"],
    ["tree_hide.png", "hide"], ["tree_show.png", "show"], ["type_number.png", "hash"],
  ],
};

/* ---------- SkyAlt ---------- */

const sideGlyphs = {
  menu: <path d="M2 4.500H15M2 8.500H15M2 13H15" stroke="#000" />,
  hide: <path d="M4.700 6.800H12.300L9 11.200H8Z" />,
  show: <path d="M7 4.700L10.800 8V9L7 12.300Z" />,
  hash: <path d={hashPath} transform="translate(3.200 3.200) scale(.5)" stroke="#000" strokeWidth="2.400" />,
};

const sideItems = [
  ["context.png", "menu"],
  ["tree_hide.png", "hide"],
  ["tree_show.png", "show"],
  ["type_number.png", "hash"],
];

const columnEdges = [0, 15, 30, 46, 61, 76, 92, 107, 122, 138, 153];
const rowEdges = [0, 15, 30, 45, 61, 76, 91, 107, 122, 137, 153, 168, 183, 199, 214, 229, 244];
const pixelRows = [
  "ed d7 dd",
  "dd 85 82 f2",
  "e4 52 0e 9a f5",
  "e4 5e 00 1a 9c f1",
  "e4 5e 00 00 22 97 ea",
  "e4 5e 00 00 00 2a 90 ef",
  "e4 5e 00 00 00 00 28 91 f7",
  "e4 5e 00 00 00 00 00 30 cf fc",
  "e4 5e 00 00 00 00 22 8a fd",
  "e4 5e 00 00 00 24 90 ed",
  "e4 5e 00 00 24 8e e9",
  "e4 5e 00 1e 88 ef",
  "e4 5b 10 82 fb",
  "db 80 73 fc",
  "f1 da dd",
];

const PixelImage = () => (
  <svg width="153" height="244" shapeRendering="crispEdges">
    {pixelRows.map((row, r) =>
      row.split(" ").map((v, c) => (
        <rect
          key={`${r}-${c}`}
          x={columnEdges[c]}
          y={rowEdges[r]}
          width={columnEdges[c + 1] - columnEdges[c]}
          height={rowEdges[r + 1] - rowEdges[r]}
          fill={`#${v}${v}${v}`}
        />
      ))
    )}
  </svg>
);

const SkyAlt = () => (
  <AppWindow>
    <AppTitle>
      <svg width="15" height="14" viewBox="0 0 15 14">
        <rect x=".5" y=".5" width="14" height="13" fill="#eef1f1" stroke="#b4b9ba" />
        <rect x="2" y="3" width="5" height="8" fill="#4a9088" />
        <path d="M9 3H13V7H9Z" fill="#d9dedd" />
      </svg>
      SkyAlt
      <AppCaption>
        <CaptionGlyphs color="#000" />
      </AppCaption>
    </AppTitle>
    <AppBody>
      <Side>
        {sideItems.map(([name, glyph]) => (
          <SideRow key={name}>
            <SideItem $on={glyph === "show"}>
              <svg width="20" height="17" viewBox="-2 0 20 17">{sideGlyphs[glyph]}</svg>
              <SideName>{name}</SideName>
            </SideItem>
            <svg width="9" height="9" viewBox="0 0 9 9" stroke="#000" strokeWidth="1.100">
              <path d="M0 1.400H9M0 4.700H9M0 8H9" />
            </svg>
          </SideRow>
        ))}
      </Side>
      <Canvas>
        <PixelImage />
      </Canvas>
    </AppBody>
    <Fps>FPS(client: 2, server: 152), DOWN(3.353 KB/s), UP(0.246 KB/s)</Fps>
  </AppWindow>
);

export default function App() {
  return (
    <Desktop>
      <GlobalStyle />
      <Screen>
        <Explorer win={leftWindow} />
        <Explorer win={rightWindow} />
        <SkyAlt />
        <Cursor width="14" height="21" viewBox="0 0 14 21">
          <path d="M1.500 1.500V16.500L5 13.300L7.500 19L10 18L7.500 12.500H12.500Z" fill="#fff" stroke="#222" />
        </Cursor>
      </Screen>
    </Desktop>
  );
}
